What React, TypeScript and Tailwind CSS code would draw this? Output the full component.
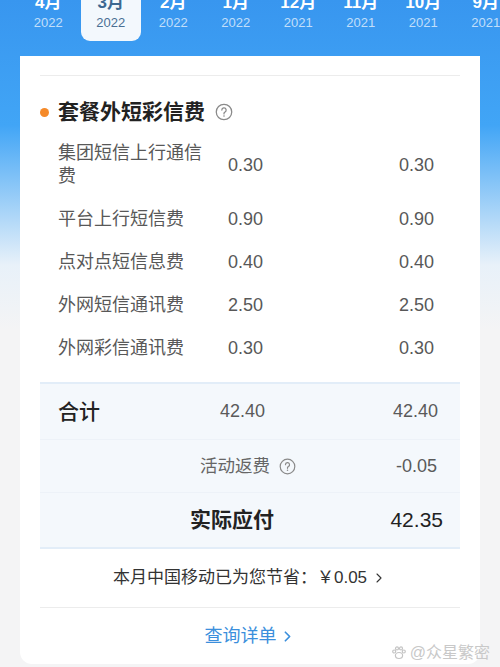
import { ChevronRight } from "lucide-react";

const months = [
  { m: "4月", y: "2022" },
  { m: "3月", y: "2022", active: true },
  { m: "2月", y: "2022" },
  { m: "1月", y: "2022" },
  { m: "12月", y: "2021" },
  { m: "11月", y: "2021" },
  { m: "10月", y: "2021" },
  { m: "9月", y: "2021" },
];

const fees = [
  { name: "集团短信上行通信费", a: "0.30", b: "0.30" },
  { name: "平台上行短信费", a: "0.90", b: "0.90" },
  { name: "点对点短信息费", a: "0.40", b: "0.40" },
  { name: "外网短信通讯费", a: "2.50", b: "2.50" },
  { name: "外网彩信通讯费", a: "0.30", b: "0.30" },
];

function HelpIcon({ size = 17 }: { size?: number }) {
  return (
    <svg width={size} height={size} viewBox="0 0 20 20" fill="none" className="shrink-0">
      <circle cx="10" cy="10" r="8.6" stroke="#8a8a8a" strokeWidth="1.4" />
      <path d="M7.6 7.9a2.4 2.4 0 1 1 3.4 2.2c-.7.3-1 .8-1 1.5v.6" stroke="#8a8a8a" strokeWidth="1.4" strokeLinecap="round" />
      <circle cx="10" cy="14.4" r="0.9" fill="#8a8a8a" />
    </svg>
  );
}

function Paw() {
  return (
    <svg width="16" height="16" viewBox="0 0 16 16" fill="none" stroke="#c4c4c4" strokeWidth="1.2">
      <ellipse cx="8" cy="10.5" rx="3.6" ry="3" />
      <circle cx="3.2" cy="6.5" r="1.5" />
      <circle cx="6" cy="3.4" r="1.5" />
      <circle cx="10" cy="3.4" r="1.5" />
      <circle cx="12.8" cy="6.5" r="1.5" />
    </svg>
  );
}

export default function App() {
  return (
    <div
      className="relative h-[667px] w-[500px] overflow-hidden bg-[linear-gradient(180deg,#3896ef_0px,#41a5f6_125px,#e8f1f9_265px,#f4f4f5_330px)]"
      style={{ fontFamily: '"Liberation Sans", "Noto Sans CJK SC", sans-serif' }}
    >
      {/* month tabs */}
      <div className="mt-[-8px] flex pl-[17px]">
        {months.map((t) => (
          <div key={t.m} className="flex w-[62.5px] shrink-0 justify-center">
            <div
              className={`flex w-[60px] flex-col items-center pb-[9px] rounded-b-[9px] ${
                t.active ? "bg-[#f3f8fd]" : ""
              }`}
            >
              <span
                className={`text-[17px] font-bold leading-[22px] ${t.active ? "text-[#3d6791]" : "text-white"}`}
              >
                {t.m}
              </span>
              <span
                className={`text-[13px] leading-[18px] ${t.active ? "text-[#4a6f94]" : "text-white/70"}`}
              >
                {t.y}
              </span>
            </div>
          </div>
        ))}
      </div>

      {/* bill card */}
      <div className="mx-[20px] mt-[15px] rounded-b-[12px] bg-white">
        <div className="pt-[19px]">
          <div className="mx-[20px] h-px bg-[#ececec]" />
        </div>

        <div className="flex h-[28px] items-center pl-[20px] mt-[22px]">
          <span className="h-[9px] w-[9px] rounded-full bg-[#f58a2a]" />
          <span className="ml-[9px] text-[21px] font-bold leading-[28px] text-[#222]">套餐外短彩信费</span>
          <span className="ml-[10px]">
            <HelpIcon size={18} />
          </span>
        </div>

        <div className="mt-[6px]">
          {fees.map((f) => (
            <div key={f.name} className="flex items-center py-[10px] pl-[38px] text-[18px] leading-[23px] text-[#585858]">
              <div className="w-[158px] shrink-0">{f.name}</div>
              <div className="ml-[12px] w-[60px]">{f.a}</div>
              <div className="ml-auto mr-[46px]">{f.b}</div>
            </div>
          ))}
        </div>

        {/* totals */}
        <div className="mx-[20px] mt-[12px] border-y-2 border-[#e2edf8] bg-[#f4f8fc]">
          <div className="flex h-[56px] items-center border-b border-[#edf2f8] pl-[18px] pr-[22px]">
            <span className="w-[122px] text-[21px] font-medium text-[#222]">合计</span>
            <span className="ml-[40px] text-[18px] text-[#5a5a5a]">42.40</span>
            <span className="ml-auto text-[18px] text-[#5a5a5a]">42.40</span>
          </div>
          <div className="flex h-[53px] items-center border-b border-[#edf2f8] pl-[18px] pr-[23px]">
            <span className="w-[122px]" />
            <span className="ml-[20px] flex items-center gap-[9px] text-[17.5px] text-[#666]">
              活动返费
              <HelpIcon size={17} />
            </span>
            <span className="ml-auto text-[18px] text-[#5a5a5a]">-0.05</span>
          </div>
          <div className="flex h-[54px] items-center pl-[18px] pr-[17px]">
            <span className="w-[122px]" />
            <span className="ml-[10px] text-[21px] font-bold text-[#222]">实际应付</span>
            <span className="ml-auto text-[21px] text-[#222]">42.35</span>
          </div>
        </div>

        <div className="flex h-[58px] items-center justify-center text-[17px] text-[#333]">
          <span>本月中国移动已为您节省：￥0.05</span>
          <ChevronRight className="ml-[4px] h-[16px] w-[16px] text-[#333]" strokeWidth={1.6} />
        </div>
        <div className="mx-[20px] h-px bg-[#ececec]" />
        <div className="flex h-[56px] items-center justify-center text-[18px] text-[#3b8fdc]">
          <span>查询详单</span>
          <ChevronRight className="ml-[2px] h-[17px] w-[17px]" strokeWidth={2.4} />
        </div>
      </div>

      {/* watermark */}
      <div className="absolute bottom-[2px] right-[10px] flex items-center gap-[3px] text-[16px] text-[#c8c8c8]">
        <Paw />
        <span>@众星繁密</span>
      </div>
    </div>
  );
}
